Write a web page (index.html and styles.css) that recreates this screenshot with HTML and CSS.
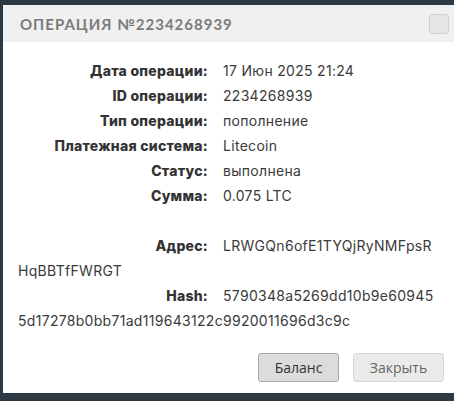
FILE: index.html
```html
<!DOCTYPE html>
<html lang="ru">
<head>
<meta charset="utf-8">
<title>Операция</title>
<link rel="stylesheet" href="styles.css">
</head>
<body>
<div class="modal">
  <div class="header">
    <div class="title">ОПЕРАЦИЯ №2234268939</div>
    <div class="check"></div>
  </div>
  <div class="content">
    <div class="row"><span class="lbl">Дата операции:</span><span class="val">17 Июн 2025 21:24</span></div>
    <div class="row"><span class="lbl">ID операции:</span><span class="val">2234268939</span></div>
    <div class="row"><span class="lbl">Тип операции:</span><span class="val">пополнение</span></div>
    <div class="row"><span class="lbl">Платежная система:</span><span class="val">Litecoin</span></div>
    <div class="row"><span class="lbl">Статус:</span><span class="val">выполнена</span></div>
    <div class="row"><span class="lbl">Сумма:</span><span class="val">0.075 LTC</span></div>
    <div class="row blank"></div>
    <div class="row"><span class="lbl">Адрес:</span><span class="val">LRWGQn6ofE1TYQjRyNMFpsR<wbr>HqBBTfFWRGT</span></div>
    <div class="row"><span class="lbl">Hash:</span><span class="val">5790348a5269dd10b9e60945<wbr>5d17278b0bb71ad119643122c9920011696d3c9c</span></div>
  </div>
  <div class="footer">
    <button class="btn btn-primary">Баланс</button>
    <button class="btn btn-close">Закрыть</button>
  </div>
</div>
</body>
</html>
```

FILE: styles.css
```css
html, body {
  margin: 0;
  padding: 0;
}
body {
  background: #2e3a43;
  width: 454px;
  height: 401px;
  overflow: hidden;
}
.modal {
  margin: 5px 0 0 3px;
  width: 451px;
  height: 388px;
  background: #ffffff;
  display: flex;
  flex-direction: column;
}
.header {
  height: 37px;
  background: #f0f0f0;
  display: flex;
  align-items: center;
  justify-content: space-between;
  padding: 0 5px 0 17px;
}
.title {
  font-family: "Lato", sans-serif;
  font-weight: 700;
  font-size: 15px;
  letter-spacing: 1px;
  color: #7b7b7b;
}
.check {
  width: 18px;
  height: 18px;
  border: 1px solid #cfcfcf;
  border-radius: 4px;
  background: #e6e6e6;
}
.content {
  flex: 1;
  padding: 16px 12px 0 15px;
  font-family: "Inter", "Lato", sans-serif;
  font-size: 14px;
  line-height: 25px;
  color: #333333;
}
.row {
  min-height: 25px;
}
.lbl {
  display: inline-block;
  width: 190px;
  margin-right: 15px;
  text-align: right;
  font-weight: 800;
  letter-spacing: 0.25px;
  color: #333333;
}
.val {
  color: #3a3a3a;
  letter-spacing: 0.3px;
}
.footer {
  display: flex;
  justify-content: flex-end;
  gap: 14px;
  padding: 0 10px 11px 0;
}
.btn {
  height: 29px;
  border-radius: 3px;
  font-family: "Open Sans", sans-serif;
  font-size: 14px;
  padding: 0;
  cursor: pointer;
}
.btn-primary {
  width: 81px;
  background: #dcdcdc;
  border: 1px solid #a9a9a9;
  color: #333333;
}
.btn-close {
  width: 91px;
  background: #eaeaea;
  border: 1px solid #d6d6d6;
  color: #666666;
}
```
